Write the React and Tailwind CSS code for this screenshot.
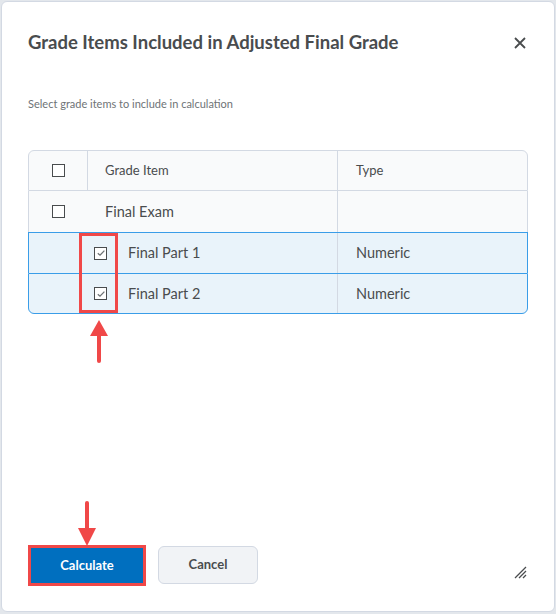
import React from 'react';

const font = { fontFamily: 'Lato, "Open Sans", sans-serif' };

const Box = ({ checked }) => (
  <span className="inline-flex h-[13px] w-[13px] items-center justify-center border-[1.5px] border-[#494c4e] bg-white">
    {checked && (
      <svg width="10" height="10" viewBox="0 0 10 10">
        <path d="M1.8 5.2 L4 7.2 L8.4 2.6" fill="none" stroke="#6e7376" strokeWidth="1.3" />
      </svg>
    )}
  </span>
);

const App = () => {
  return (
    <div className="h-[614px] w-[556px] bg-[#e3e7ec] p-px text-[#494c4e]" style={font}>
      <div className="relative flex h-[611px] flex-col rounded-md border border-[#d3d9e3] bg-white px-[26px]">
        {/* Header */}
        <div className="flex items-center justify-between pt-[28px]">
          <h2 className="text-[18.5px] font-bold leading-[24px] text-[#494c4e]">
            Grade Items Included in Adjusted Final Grade
          </h2>
          <svg width="12" height="12" viewBox="0 0 12 12" className="mr-[2px] mt-[2px]">
            <path d="M1 1 L11 11 M11 1 L1 11" stroke="#494c4e" strokeWidth="1.8" />
          </svg>
        </div>

        <p className="mt-[43px] text-[11px] leading-[14px] text-[#6e7376]">Select grade items to include in calculation</p>

        {/* Table */}
        <div className="mt-[39px] w-[500px] text-[14.5px]">
          <div className="flex h-[41px] rounded-t-md border border-[#d3d9e3] bg-[#f9fafb] text-[13px]">
            <div className="flex w-[59px] items-center justify-center border-r border-[#d3d9e3]">
              <Box />
            </div>
            <div className="flex w-[250px] items-center border-r border-[#d3d9e3] pl-[17px]">Grade Item</div>
            <div className="flex flex-1 items-center pl-[18px]">Type</div>
          </div>
          <div className="flex h-[41px] border-x border-[#d3d9e3] bg-[#f9fafb]">
            <div className="flex w-[59px] items-center justify-center">
              <Box />
            </div>
            <div className="flex w-[250px] items-center border-r border-[#d3d9e3] pl-[17px]">Final Exam</div>
            <div className="flex-1" />
          </div>
          {['Final Part 1', 'Final Part 2'].map((name, i) => (
            <div
              key={name}
              className={`flex h-[41px] border-x border-t border-[#3a9de8] bg-[#e9f3fa] ${i === 1 ? 'rounded-b-md border-b' : ''}`}
            >
              <div className="flex w-[99px] items-center justify-end pr-[21px]">
                <Box checked />
              </div>
              <div className="flex w-[210px] items-center border-r border-[#d3d9e3]">{name}</div>
              <div className="flex flex-1 items-center pl-[18px]">Numeric</div>
            </div>
          ))}
        </div>

        <div className="flex-1" />

        {/* Footer */}
        <div className="flex items-center gap-[12px] pb-[25px]">
          <button className="h-[41px] w-[118px] border-[3px] border-[#f04848] bg-[#006fbf] text-[13px] font-bold text-white">
            Calculate
          </button>
          <button className="mb-[2px] h-[38px] w-[100px] rounded-md border border-[#d3d9e3] bg-[#f1f3f6] text-[13px] font-bold text-[#494c4e]">
            Cancel
          </button>
          <div className="flex-1" />
          <svg width="13" height="13" viewBox="0 0 13 13" className="mr-[1px] mt-[14px]">
            <path d="M1 12 L12 1 M5 12 L12 5 M9 12 L12 9" stroke="#494c4e" strokeWidth="1.3" />
          </svg>
        </div>

        {/* Annotations */}
        <div className="pointer-events-none absolute left-[77px] top-[231px] h-[80px] w-[39px] border-[3px] border-[#f04848]" />
        <svg className="pointer-events-none absolute left-[87px] top-[318px]" width="20" height="44" viewBox="0 0 20 44">
          <path d="M10 0 L19 16 L1 16 Z" fill="#f04848" />
          <path d="M10 14 L10 41" stroke="#f04848" strokeWidth="4" strokeLinecap="round" />
        </svg>
        <svg className="pointer-events-none absolute left-[75px] top-[498px]" width="20" height="46" viewBox="0 0 20 46">
          <path d="M10 3 L10 30" stroke="#f04848" strokeWidth="4" strokeLinecap="round" />
          <path d="M10 46 L19 28 L1 28 Z" fill="#f04848" />
        </svg>
      </div>
    </div>
  );
};

export default App;
